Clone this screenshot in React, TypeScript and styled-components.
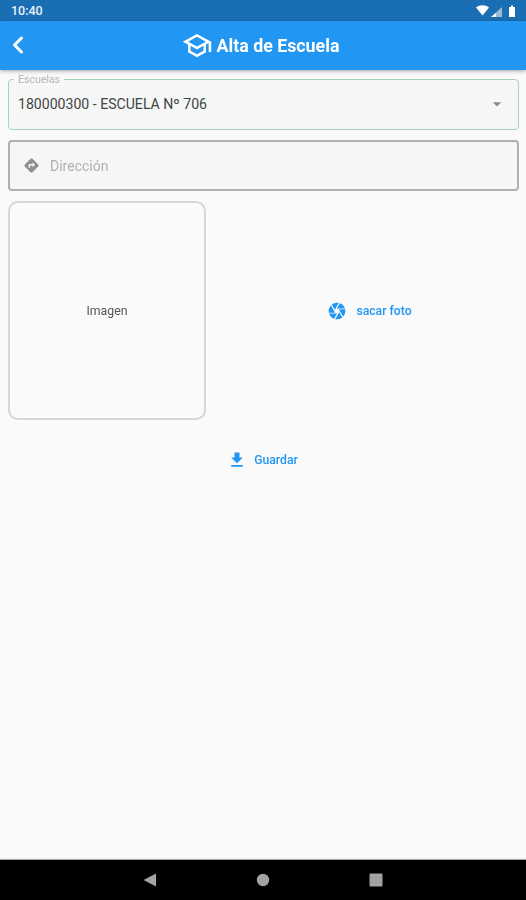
import React from 'react';
import styled, { createGlobalStyle } from 'styled-components';
import { MdCamera, MdDirections, MdFileDownload, MdOutlineSchool, MdArrowDropDown } from 'react-icons/md';
import { ChevronLeft } from 'lucide-react';

const GlobalStyle = createGlobalStyle`
  html, body {
    margin: 0;
    padding: 0;
    background: #fafafa;
    font-family: Roboto, "Noto Sans", sans-serif;
  }
`;

const Screen = styled.div`
  width: 526px;
  height: 900px;
  display: flex;
  flex-direction: column;
  overflow: hidden;
  filter: blur(0.6px);
`;

const StatusBar = styled.div`
  height: 21px;
  flex: none;
  background: #1a6fb4;
  color: #e8f1f8;
  display: flex;
  align-items: center;
  justify-content: space-between;
  padding: 0 9px 0 11px;
  font-size: 12.5px;
  font-weight: 500;
`;

const StatusIcons = styled.div`
  display: flex;
  align-items: center;
`;

const AppBar = styled.header`
  height: 49px;
  flex: none;
  background: #2196f3;
  color: #fff;
  display: flex;
  align-items: center;
  position: relative;
  box-shadow: 0 1px 4px rgba(0, 0, 0, 0.35);
  z-index: 1;
`;

const BackButton = styled.div`
  position: absolute;
  left: 4px;
  top: 10px;
  display: flex;
`;

const Title = styled.h1`
  flex: 1;
  margin: 0;
  display: flex;
  align-items: center;
  justify-content: center;
  gap: 4px;
  font-size: 17.8px;
  font-weight: 700;
  transform: translateX(-2.5px);
`;

const Content = styled.main`
  flex: 1;
  display: flex;
  flex-direction: column;
  padding: 9px 7px 0 8px;
  background: #fafafa;
`;

const SelectField = styled.div`
  height: 51px;
  box-sizing: border-box;
  border: 1px solid #a5d3b6;
  border-radius: 4px;
  background: #f4f7f5;
  display: flex;
  align-items: center;
  justify-content: space-between;
  padding: 0 11px 2px 9px;
  position: relative;
  color: #444;
  font-size: 14.1px;
`;

const FloatingLabel = styled.span`
  position: absolute;
  left: 5px;
  top: -6px;
  padding: 0 4px;
  background: #f8faf8;
  color: #b5b5b5;
  font-size: 10.5px;
  line-height: 11px;
`;

const AddressField = styled.div`
  height: 51px;
  box-sizing: border-box;
  margin-top: 10px;
  border: 2px solid #b0b0b0;
  border-radius: 4px;
  background: #f4f7f6;
  display: flex;
  align-items: center;
  gap: 10px;
  padding: 0 0 0 13px;
  color: #b0b0b0;
  font-size: 14px;
`;

const PhotoRow = styled.div`
  display: flex;
  align-items: center;
  margin-top: 10px;
`;

const ImageBox = styled.div`
  width: 198px;
  height: 219px;
  flex: none;
  box-sizing: border-box;
  border: 2px solid #d6d6d6;
  border-radius: 10px;
  display: flex;
  align-items: center;
  justify-content: center;
  color: #555;
  font-size: 12.3px;
`;

const TextAction = styled.div<{ $gap: number }>`
  display: flex;
  align-items: center;
  justify-content: center;
  gap: ${(p) => p.$gap}px;
  color: #2196f3;
  font-size: 12.2px;
  font-weight: 500;
`;

const PhotoAction = styled(TextAction)`
  flex: 1;
  transform: translateX(7px);
`;

const SaveAction = styled(TextAction)`
  margin-top: 28px;
  height: 24px;
  transform: translateX(-1px);
`;

const NavBar = styled.nav`
  height: 40px;
  flex: none;
  background: #000;
  display: flex;
  align-items: center;
  justify-content: center;
  gap: 97px;
  box-shadow: 0 -1px 1px rgba(0, 0, 0, 0.3);
  padding-right: 1px;
`;

const NavIcon = styled.svg`
  width: 16px;
  height: 16px;
  fill: #a2a2a2;
`;

const App: React.FC = () => {
  return (
    <Screen>
      <GlobalStyle />
      <StatusBar>
        <span>10:40</span>
        <StatusIcons>
          <svg width="41" height="14" viewBox="0 0 41 14">
            <path d="M0 3.5 C4 0.5 9 0.5 13 3.5 L6.5 11.5 Z" fill="#fff" />
            <path d="M26 3 V13 H15 Z" fill="#9dbad2" />
            <path d="M20 9 V13 H15 Z" fill="#fff" />
            <path d="M33 3 H35 V1.5 H37 V3 H39 V13 H33 Z" fill="#fff" />
          </svg>
        </StatusIcons>
      </StatusBar>
      <AppBar>
        <BackButton>
          <ChevronLeft size={28} strokeWidth={2.6} color="#fff" />
        </BackButton>
        <Title>
          <MdOutlineSchool size={31} />
          Alta de Escuela
        </Title>
      </AppBar>
      <Content>
        <SelectField>
          <FloatingLabel>Escuelas</FloatingLabel>
          <span>180000300 - ESCUELA Nº 706</span>
          <MdArrowDropDown size={20} color="#8a8a8a" />
        </SelectField>
        <AddressField>
          <MdDirections size={17} color="#8f8f8f" />
          <span>Dirección</span>
        </AddressField>
        <PhotoRow>
          <ImageBox>Imagen</ImageBox>
          <PhotoAction $gap={9}>
            <MdCamera size={20} />
            <span>sacar foto</span>
          </PhotoAction>
        </PhotoRow>
        <SaveAction $gap={7}>
          <MdFileDownload size={20} />
          <span>Guardar</span>
        </SaveAction>
      </Content>
      <NavBar>
        <NavIcon viewBox="0 0 16 16">
          <path d="M14 1.5 V14.5 L1.5 8 Z" />
        </NavIcon>
        <NavIcon viewBox="0 0 16 16">
          <circle cx="8" cy="8" r="6.2" />
        </NavIcon>
        <NavIcon viewBox="0 0 16 16">
          <rect x="1.5" y="1.5" width="13" height="13" rx="1" />
        </NavIcon>
      </NavBar>
    </Screen>
  );
};

export default App;
